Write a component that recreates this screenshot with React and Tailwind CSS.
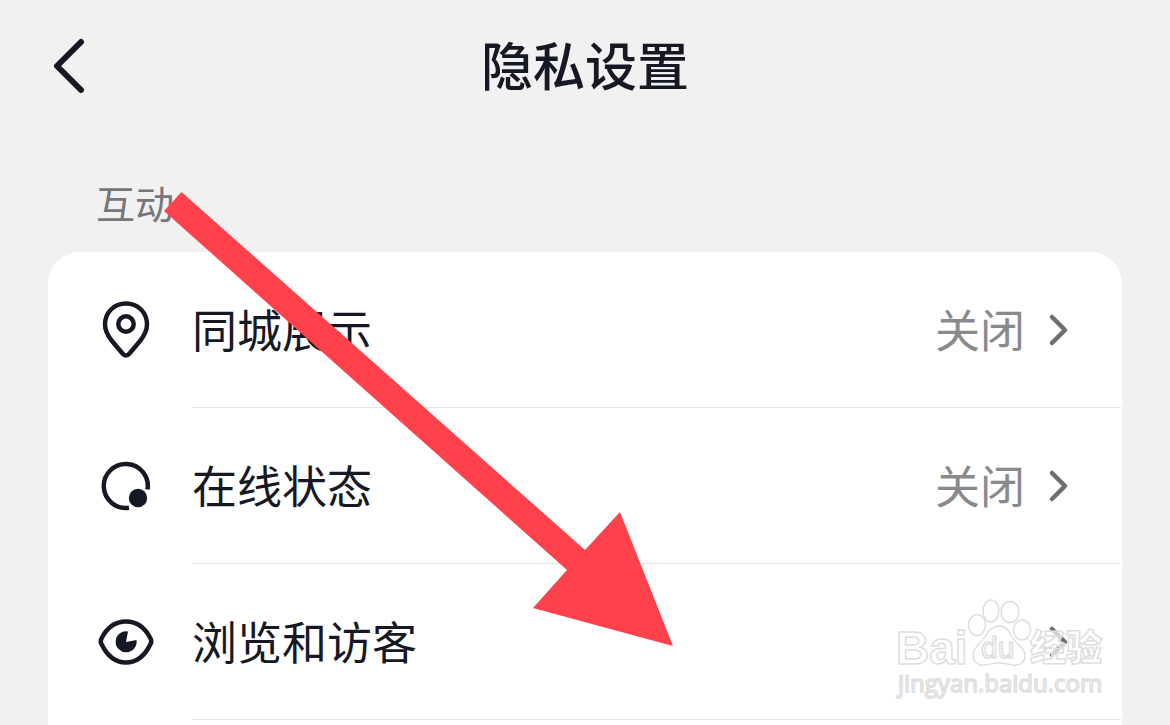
import React from "react";

const PinIcon = () => (
    <svg viewBox="0 0 56 60" className="w-14 h-15 shrink-0" fill="none" stroke="#161823" strokeWidth="4.5" strokeLinejoin="round" aria-hidden="true">
        <path d="M28 3.500C16 3.500 7 12.500 7 24.500C7 31 10 36 14 41L24.500 53.500Q28 57.500 31.500 53.500L42 41C46 36 49 31 49 24.500C49 12.500 40 3.500 28 3.500Z" />
        <circle cx="28" cy="24" r="7.700" />
    </svg>
);

const StatusIcon = () => (
    <svg viewBox="0 0 56 60" className="w-14 h-15 shrink-0" aria-hidden="true">
        <path d="M49.500 33.500A22 22 0 1 0 31 51.700" fill="none" stroke="#161823" strokeWidth="4.500" />
        <circle cx="40" cy="42" r="11.500" fill="#ffffff" />
        <circle cx="40" cy="42" r="9.200" fill="#161823" />
    </svg>
);

const EyeIcon = () => (
    <svg viewBox="0 0 56 60" className="w-14 h-15 shrink-0" aria-hidden="true">
        <path d="M3.500 26.500C9 15.500 17.500 9.500 28 9.500S47 15.500 52.500 26.500Q54 29.500 52.500 32C47 43.500 38.500 50.500 28 50.500S9 43.500 3.500 32Q2 29.500 3.500 26.500Z" fill="none" stroke="#161823" strokeWidth="4.500" />
        <path d="M28 30L30 19.500A10.500 10.500 0 1 0 38.500 28Z" fill="#161823" />
    </svg>
);

const Chevron = () => (
    <svg viewBox="0 0 24 36" className="w-6 h-9 shrink-0" fill="none" stroke="#6f6f73" strokeWidth="4.500" strokeLinecap="round" strokeLinejoin="round" aria-hidden="true">
        <path d="M5 5L18 18L5 31" />
    </svg>
);

const items = [
    { label: "同城展示", value: "关闭", Icon: PinIcon },
    { label: "在线状态", value: "关闭", Icon: StatusIcon },
    { label: "浏览和访客", value: "", Icon: EyeIcon },
];

const SettingRow = ({ item }) => {
    const { label, value, Icon } = item;
    return (
        <li>
            <button type="button" className="flex w-full h-39 text-left">
                <span className="flex w-36 shrink-0 items-center self-stretch pl-[50px]">
                    <Icon />
                </span>
                <span className="flex flex-1 items-center self-stretch border-b border-[#e3e3e4] mr-px pr-[50px] text-[45px] leading-[60px]">
                    <span className="flex-1 pb-0.5 text-[#161823]">{label}</span>
                    <span className="mr-[22px] pb-0.5 text-[#8a8a8d]">{value}</span>
                    <Chevron />
                </span>
            </button>
        </li>
    );
};

const Arrow = () => (
    <svg viewBox="0 0 510 456" className="absolute left-[164px] top-[191px] w-[510px] h-[456px] pointer-events-none" aria-hidden="true">
        <polygon points="17.500,1 421,359 456,321 509,455 369,417 403,379 0,20" fill="#fe414a" />
    </svg>
);

const Watermark = () => (
    <svg viewBox="0 0 216 106" className="absolute right-[60px] bottom-[21px] w-[216px] h-[106px] pointer-events-none" fill="#ffffff" fillOpacity="0.7" stroke="#dedede" strokeWidth="1.500">
        <text x="2" y="66" fontSize="46" fontWeight="700" fontFamily="Liberation Sans, sans-serif">Bai</text>
        <ellipse cx="83" cy="27" rx="8.500" ry="10.500" />
        <ellipse cx="97" cy="13" rx="8" ry="11" />
        <ellipse cx="116" cy="14" rx="9" ry="10.500" />
        <ellipse cx="128" cy="32" rx="8.500" ry="10" />
        <path d="M105 28C98 28 94 33 91 39C87 46 79 49 79 57C79 64 84 68 91 67C97 66 100 65 105 65S113 66 119 67C127 68 132 63 131 56C130 49 122 46 118 39C115 33 112 28 105 28Z" />
        <text x="87" y="60" fontSize="30" fontFamily="Liberation Sans, sans-serif">du</text>
        <text x="136" y="63" fontSize="36" fontWeight="900" fontFamily="Noto Sans CJK SC, sans-serif">经验</text>
        <text x="4" y="94" fontSize="24" fontFamily="Open Sans, sans-serif">jingyan.baidu.com</text>
    </svg>
);

const App = () => {
    return (
        <div className="relative flex h-screen flex-col overflow-hidden bg-[#f1f1f2] font-['Noto_Sans_CJK_SC',sans-serif] text-[#161823]">
            <header className="grid grid-cols-[1fr_auto_1fr] items-center px-12 pt-6">
                <button type="button" aria-label="返回" className="justify-self-start">
                    <svg viewBox="0 0 40 60" className="w-10 h-15" fill="none" stroke="#161823" strokeWidth="6" strokeLinecap="round" strokeLinejoin="round">
                        <path d="M33 8L9 32L33 56" />
                    </svg>
                </button>
                <h1 className="text-[52px] leading-[80px] font-medium">隐私设置</h1>
            </header>

            <main className="flex flex-1 flex-col px-12">
                <h2 className="mt-18 pl-12 text-[39px] leading-[52px] text-[#76767a]">互动</h2>
                <ul className="mt-6 flex-1 rounded-t-[32px] bg-white">
                    {items.map((item) => (
                        <SettingRow key={item.label} item={item} />
                    ))}
                </ul>
            </main>

            <Arrow />
            <Watermark />
        </div>
    );
};

export default App;
